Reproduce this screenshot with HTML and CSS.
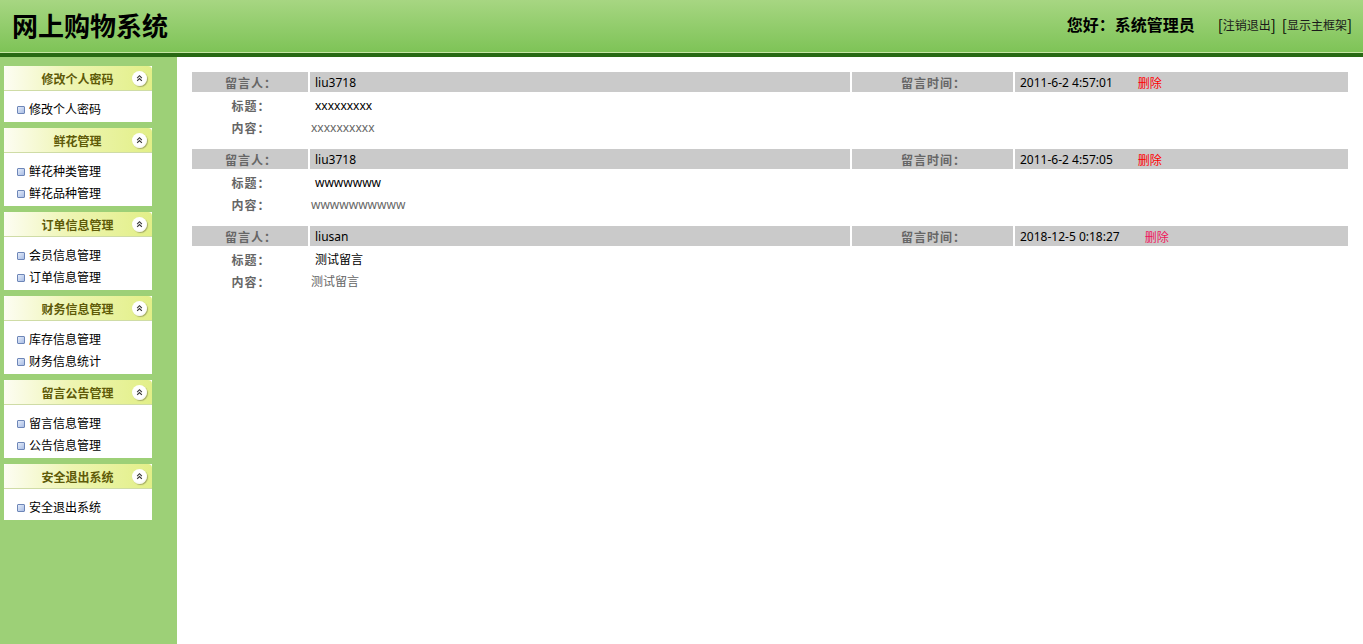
FILE: index.html
```html
<!DOCTYPE html>
<html>
<head>
  <meta charset="UTF-8">
  <link rel="stylesheet" href="styles.css">
</head>
<body>
  <div class="top-bar">
    <div class="site-title">网上购物系统</div>
    <div class="top-right">
      <span class="welcome">您好：系统管理员</span>
      <span class="top-links">
        <span class="bracket">[</span><a href="#">注销退出</a><span class="bracket">]</span>
        <span class="bracket">[</span><a href="#">显示主框架</a><span class="bracket">]</span>
      </span>
    </div>
  </div>

  <div class="layout">
    <div class="sidebar">
      <div class="menu-box">
        <div class="menu-head"><span>修改个人密码</span><i class="toggle"><svg viewBox="0 0 16 16"><path d="M5.5 7.5 8 5 10.5 7.5M5.5 10.5 8 8 10.5 10.5"/></svg></i></div>
        <ul class="menu-list">
          <li>修改个人密码</li>
        </ul>
      </div>
      <div class="menu-box">
        <div class="menu-head"><span>鲜花管理</span><i class="toggle"><svg viewBox="0 0 16 16"><path d="M5.5 7.5 8 5 10.5 7.5M5.5 10.5 8 8 10.5 10.5"/></svg></i></div>
        <ul class="menu-list">
          <li>鲜花种类管理</li>
          <li>鲜花品种管理</li>
        </ul>
      </div>
      <div class="menu-box">
        <div class="menu-head"><span>订单信息管理</span><i class="toggle"><svg viewBox="0 0 16 16"><path d="M5.5 7.5 8 5 10.5 7.5M5.5 10.5 8 8 10.5 10.5"/></svg></i></div>
        <ul class="menu-list">
          <li>会员信息管理</li>
          <li>订单信息管理</li>
        </ul>
      </div>
      <div class="menu-box">
        <div class="menu-head"><span>财务信息管理</span><i class="toggle"><svg viewBox="0 0 16 16"><path d="M5.5 7.5 8 5 10.5 7.5M5.5 10.5 8 8 10.5 10.5"/></svg></i></div>
        <ul class="menu-list">
          <li>库存信息管理</li>
          <li>财务信息统计</li>
        </ul>
      </div>
      <div class="menu-box">
        <div class="menu-head"><span>留言公告管理</span><i class="toggle"><svg viewBox="0 0 16 16"><path d="M5.5 7.5 8 5 10.5 7.5M5.5 10.5 8 8 10.5 10.5"/></svg></i></div>
        <ul class="menu-list">
          <li>留言信息管理</li>
          <li>公告信息管理</li>
        </ul>
      </div>
      <div class="menu-box">
        <div class="menu-head"><span>安全退出系统</span><i class="toggle"><svg viewBox="0 0 16 16"><path d="M5.5 7.5 8 5 10.5 7.5M5.5 10.5 8 8 10.5 10.5"/></svg></i></div>
        <ul class="menu-list">
          <li>安全退出系统</li>
        </ul>
      </div>
    </div>

    <div class="main">
      <div class="msg">
        <div class="cell label shade">留言人：</div>
        <div class="cell value shade">liu3718</div>
        <div class="cell label shade">留言时间：</div>
        <div class="cell value shade">2011-6-2 4:57:01<a href="#" class="del">删除</a></div>
        <div class="cell label low">标题：</div>
        <div class="cell value wide low">xxxxxxxxx</div>
        <div class="cell label low">内容：</div>
        <div class="cell body wide low">xxxxxxxxxx</div>
      </div>
      <div class="msg">
        <div class="cell label shade">留言人：</div>
        <div class="cell value shade">liu3718</div>
        <div class="cell label shade">留言时间：</div>
        <div class="cell value shade">2011-6-2 4:57:05<a href="#" class="del">删除</a></div>
        <div class="cell label low">标题：</div>
        <div class="cell value wide low">wwwwwww</div>
        <div class="cell label low">内容：</div>
        <div class="cell body wide low">wwwwwwwwww</div>
      </div>
      <div class="msg">
        <div class="cell label shade">留言人：</div>
        <div class="cell value shade">liusan</div>
        <div class="cell label shade">留言时间：</div>
        <div class="cell value shade">2018-12-5 0:18:27<a href="#" class="del visited">删除</a></div>
        <div class="cell label low">标题：</div>
        <div class="cell value wide low">测试留言</div>
        <div class="cell label low">内容：</div>
        <div class="cell body wide low">测试留言</div>
      </div>
    </div>
  </div>
</body>
</html>
```

FILE: styles.css
```css
* {
  box-sizing: border-box;
}

body {
  margin: 0;
  height: 100vh;
  overflow: hidden;
  font-family: "Noto Sans", "Noto Sans CJK SC", sans-serif;
  font-size: 12px;
  color: #000;
  background: #fff;
}

a {
  text-decoration: none;
}

.top-bar {
  height: 57px;
  display: flex;
  justify-content: space-between;
  align-items: center;
  padding: 0 11px 5px 12px;
  background: linear-gradient(180deg, #a7d682 0%, #7dc356 100%);
  border-bottom: 4px solid #286914;
  box-shadow: inset 0 -1px 0 #c6e6a4;
}

.site-title {
  font-family: "Noto Sans CJK SC", sans-serif;
  font-size: 26px;
  font-weight: bold;
  color: #000;
}

.top-right {
  display: flex;
  align-items: center;
  gap: 23px;
}

.welcome {
  font-family: "Noto Sans CJK SC", sans-serif;
  font-size: 16px;
  font-weight: bold;
}

.top-links {
  font-family: "Noto Sans CJK SC", sans-serif;
  display: flex;
  align-items: center;
}

.top-links a {
  font-size: 12px;
  color: #1a1a1a;
}

.top-links .bracket {
  font-size: 15px;
  color: #000;
}

.top-links .bracket + .bracket {
  margin-left: 6px;
}

.layout {
  display: flex;
  height: calc(100vh - 57px);
}

.sidebar {
  width: 177px;
  flex-shrink: 0;
  background: #9dd077;
  padding: 9px 0 0 4px;
  display: flex;
  flex-direction: column;
  gap: 6px;
}

.menu-box {
  width: 148px;
  background: #fff;
}

.menu-head {
  height: 25px;
  position: relative;
  display: flex;
  align-items: center;
  justify-content: center;
  border-radius: 4px 4px 0 0;
  background: linear-gradient(90deg, #fdfdf3 0%, #eef5b2 45%, #e2ef88 100%);
  border-bottom: 1px solid #cfdca6;
  font-family: "Noto Sans CJK SC", sans-serif;
  font-weight: bold;
  color: #5e5a08;
}

.menu-head span {
  margin-left: -1px;
}

.toggle {
  position: absolute;
  right: 5px;
  top: 5px;
  width: 15px;
  height: 15px;
  border-radius: 50%;
  background: radial-gradient(circle at 45% 40%, #fff 55%, #e6e6e6 100%);
  box-shadow: 1px 1px 1px rgba(90, 90, 60, 0.45);
}

.toggle svg {
  display: block;
  width: 15px;
  height: 15px;
  fill: none;
  stroke: #333;
  stroke-width: 1.2;
}

.menu-list {
  list-style: none;
  margin: 0;
  padding: 7px 0 2px 0;
}

.menu-list li {
  height: 22px;
  line-height: 22px;
  padding-left: 25px;
  position: relative;
  font-family: "Noto Sans CJK SC", sans-serif;
}

.menu-list li::before {
  content: "";
  position: absolute;
  left: 13px;
  top: 8px;
  width: 6px;
  height: 6px;
  border: 1px solid #6d86b8;
  border-radius: 1px;
  background: linear-gradient(135deg, #e4ecfa, #a9bde4);
}

.main {
  flex: 1;
  background: #fff;
  padding: 15px 15px 0 15px;
}

.msg {
  display: grid;
  grid-template-columns: 116px 540px 161px 1fr;
  grid-auto-rows: 20px;
  gap: 2px;
  margin-bottom: 13px;
}

.cell {
  display: flex;
  align-items: center;
  white-space: nowrap;
}

.shade {
  background: #cacaca;
}

.low {
  padding-top: 2px;
}

.label {
  justify-content: center;
  font-family: "Noto Sans CJK SC", sans-serif;
  font-weight: bold;
  color: #666;
  padding-left: 2px;
  letter-spacing: 1px;
}

.value {
  padding-left: 5px;
  color: #000;
}

.body {
  padding-left: 1px;
  color: #666;
}

.wide {
  grid-column: 2 / 5;
}

.del {
  margin-left: 25px;
  color: #f00;
  font-family: "Noto Sans CJK SC", sans-serif;
}

.del.visited {
  color: #f0145a;
}
```
